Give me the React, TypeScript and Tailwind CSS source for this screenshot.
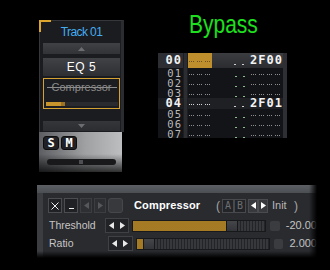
import React from "react";

function cx(...v: Array<string | false | null | undefined>) {
  return v.filter(Boolean).join(" ");
}

const mono = "font-['DejaVu_Sans_Mono',monospace]";
const sans = "font-['Liberation_Sans',Arial,sans-serif]";

const dotGrey = "bg-[repeating-linear-gradient(90deg,#8e8e8e_0_1px,transparent_1px_2px)]";
const dotWhite = "bg-[repeating-linear-gradient(90deg,#d6d6d6_0_1px,transparent_1px_2px)]";
const dotDark = "bg-[repeating-linear-gradient(90deg,#6b5424_0_1px,transparent_1px_2px)]";

function Dots({ n, tone }: { n: number; tone: string }) {
  return (
    <div className="flex gap-[3px]">
      {Array.from({ length: n }).map((_, i) => (
        <div key={i} className={cx("h-px w-[5px]", tone)} />
      ))}
    </div>
  );
}

function Tri({ dir, className }: { dir: "l" | "r" | "u" | "d"; className: string }) {
  const pts = {
    l: "5,0 5,7 0,3.5",
    r: "0,0 0,7 5,3.5",
    u: "0,4 7,4 3.5,0",
    d: "0,0 7,0 3.5,4",
  }[dir];
  const horiz = dir === "l" || dir === "r";
  return (
    <svg
      width={horiz ? 5 : 7}
      height={horiz ? 7 : 4}
      viewBox={horiz ? "0 0 5 7" : "0 0 7 4"}
      className={className}
    >
      <polygon points={pts} fill="currentColor" />
    </svg>
  );
}

function TrackStrip() {
  return (
    <div className="absolute left-[39px] top-[20px] w-[85px]">
      <div className="relative border-l border-t border-r-[3px] border-[#36373b] border-r-[#2b2c30] bg-[#1b1c1f] pb-[1px] pl-[3px] pr-[1px]">
        <div className="absolute -left-px -top-px h-[2px] w-[12px] bg-[#dea52c]" />
        <div className="absolute -left-px -top-px h-[12px] w-[2px] bg-[#dea52c]" />

        <div className={cx("flex h-[22px] items-center justify-center text-[12px] tracking-[-0.6px] text-[#44acf2]", sans)}>
          Track 01
        </div>

        <div className="flex h-[11px] items-center justify-center bg-gradient-to-b from-[#404145] to-[#323337]">
          <Tri dir="u" className="text-[#6c6d71]" />
        </div>

        <div className={cx("mt-[4px] flex h-[18px] items-center justify-center bg-gradient-to-b from-[#414246] to-[#2e2f33] text-[12px] tracking-[0.6px] text-white", sans)}>
          EQ 5
        </div>

        <div className="mt-[2px] flex h-[31px] flex-col border border-[#d4a133] bg-[#1c1d20] pt-[1px]">
          <div className="relative flex h-[14px] items-center justify-center">
            <span className={cx("text-[11px] text-[#8c8c8c]", sans)}>Compressor</span>
            <div className="absolute left-[3px] right-[2px] top-[7px] h-px bg-[#8c8c8c]" />
          </div>
          <div className="ml-[2px] mr-px mt-[8px] flex h-[4px] bg-[#2a2b2f]">
            <div className="w-[15px] bg-[#c8952d]" />
            <div className="w-[4px] bg-[#9b7226]" />
          </div>
        </div>

        <div className="mt-[12px] flex h-[10px] items-center justify-center bg-gradient-to-b from-[#35363a] to-[#2c2d31]">
          <Tri dir="d" className="text-[#6c6d71]" />
        </div>
      </div>

      <div className="h-[40px] w-[83px] bg-[linear-gradient(to_bottom,transparent_55%,rgba(0,0,0,0.75)),linear-gradient(to_right,#5c5e61,#9ea0a2_55%,#bcbec0)] pl-[4px] pt-[4px]">
        <div className="flex gap-[2px]">
          {["S", "M"].map((l) => (
            <div
              key={l}
              className={cx("flex h-[14px] w-[16px] items-center justify-center rounded-[3px] border border-[#0e0e0f] bg-[#202124] text-[12px] font-bold leading-none text-white", mono)}
            >
              {l}
            </div>
          ))}
        </div>
        <div className="ml-[4px] mt-[9px] flex h-[6px] w-[69px] items-center rounded-full bg-[#19191b]">
          <div className="ml-[32px] h-[4px] w-[4px] bg-[#4e4f52]" />
        </div>
      </div>
    </div>
  );
}

type Row = { n: string; big?: boolean; text?: string; h: string };

const rows: Row[] = [
  { n: "00", big: true, text: "2F00", h: "h-[15px]" },
  { n: "01", h: "h-[10px]" },
  { n: "02", h: "h-[10px]" },
  { n: "03", h: "h-[10px]" },
  { n: "04", big: true, text: "2F01", h: "h-[11px]" },
  { n: "05", h: "h-[10px]" },
  { n: "06", h: "h-[10px]" },
  { n: "07", h: "h-[10px]" },
];

function PatternView() {
  return (
    <div className="absolute left-[158px] top-[53px] h-[85px] w-[129px] overflow-hidden bg-[#131418]">
      {rows.map((r) => {
        const top = r.n === "00";
        const cur = r.n === "04";
        return (
          <div key={r.n} className={cx("flex", r.h)}>
            <div
              className={cx(
                "flex w-[25px] justify-end pr-[1px]",
                top && "bg-[#2c2e33] pt-[2px]",
                cur && "bg-[#1c1e22]",
              )}
            >
              <span
                className={cx(
                  "tracking-[1px]",
                  mono,
                  r.big
                    ? "text-[12px] font-bold leading-[11px] text-[#f2f2f2]"
                    : "text-[10.5px] leading-[10px] text-[#b9b9b9]",
                )}
              >
                {r.n}
              </span>
            </div>
            <div className="w-[5px] border-x border-[#1d1e22] bg-[#2c2d31]" />
            <div
              className={cx(
                "flex w-[95px]",
                top && "bg-gradient-to-b from-[#3b3d41] to-[#2a2c30]",
                cur && "bg-[#1e2024]",
              )}
            >
              <div className={cx("w-[25px] pl-px", top ? "bg-[#bf8f2e] pt-[8px]" : "pt-[6px]")}>
                <Dots n={3} tone={top ? dotDark : cur ? dotWhite : dotGrey} />
              </div>
              <div className={cx("ml-[22px] flex gap-[6px]", top ? "pt-[11px]" : "pt-[8px]")}>
                <div className={cx("h-px w-[2px]", r.big ? "bg-[#cfcfcf]" : "bg-[#8fbf8f]")} />
                <div className={cx("h-px w-[2px]", r.big ? "bg-[#cfcfcf]" : "bg-[#8fbf8f]")} />
              </div>
              {r.text ? (
                <div
                  className={cx(
                    "ml-[6px] text-[12px] font-bold leading-[11px] tracking-[1px] text-[#f4f4f4]",
                    mono,
                    top && "pt-[2px]",
                  )}
                >
                  {r.text}
                </div>
              ) : (
                <div className="ml-[6px] pt-[6px]">
                  <Dots n={4} tone={dotGrey} />
                </div>
              )}
            </div>
            <div className="w-[4px] bg-[#2e2f34]" />
          </div>
        );
      })}
    </div>
  );
}

function Slider({ fill }: { fill: number }) {
  return (
    <div className="relative h-[12px] w-[134px] border border-[#18191b] bg-[repeating-linear-gradient(90deg,#37383c_0_2px,#232427_2px_3px)]">
      <div
        className="absolute left-0 top-0 h-full bg-[#c99a36] bg-[radial-gradient(#a47a25_0.7px,transparent_0.9px)] bg-[length:2px_2px]"
        style={{ width: fill }}
      />
      <div
        className="absolute -top-px h-[12px] w-[12px] border border-[#17181a] bg-gradient-to-b from-[#45464a] to-[#34353a]"
        style={{ left: fill }}
      />
    </div>
  );
}

function ParamRow({ label, fill, value, mt }: { label: string; fill: number; value: string; mt: string }) {
  return (
    <div className={cx("flex h-[15px] items-center", mt)}>
      <div className={cx("w-[60px] pl-px text-[10.5px] text-[#c6c6c6]", sans)}>{label}</div>
      <div className="flex h-[15px] w-[25px] items-center justify-center gap-[6px] border border-[#404145] bg-[#222327]">
        <Tri dir="l" className="text-[#e8e8e8]" />
        <Tri dir="r" className="text-[#e8e8e8]" />
      </div>
      <div className="ml-[3px]">
        <Slider fill={fill} />
      </div>
      <div className="ml-[4px] h-[10px] w-[10px] rounded-[2px] bg-[#3b3c40]" />
      <div className={cx("ml-[6px] whitespace-nowrap text-[11px] text-[#c4c4c4]", sans)}>{value}</div>
    </div>
  );
}

function EffectPanel() {
  return (
    <div className="absolute left-[37px] top-[185px] h-[73px] w-[280px] overflow-hidden bg-[#3b3d41]">
      <div className="h-[8px] bg-gradient-to-b from-[#5c5f63] to-[#4b4e52]" />
      <div className="ml-[6px] h-[65px] bg-[#2a2b2f] pl-[5px] pt-[5px]">
        <div className="flex h-[15px] items-center">
          <div className="flex items-center gap-[2px]">
            <div className="flex h-[15px] w-[14px] items-center justify-center border border-[#4b4c50] bg-[#202124]">
              <svg width="8" height="8" viewBox="0 0 8 8">
                <path d="M0.5 0.5 L7.5 7.5 M7.5 0.5 L0.5 7.5" stroke="#ececec" strokeWidth="1" />
              </svg>
            </div>
            <div className="flex h-[15px] w-[14px] items-end justify-center border border-[#4b4c50] bg-[#202124] pb-[3px]">
              <div className="h-px w-[5px] bg-[#ececec]" />
            </div>
            <div className="flex h-[15px] w-[12px] items-center justify-center border border-[#3c3d41] bg-[#2e2f33]">
              <Tri dir="l" className="text-[#55575b]" />
            </div>
            <div className="flex h-[15px] w-[12px] items-center justify-center border border-[#3c3d41] bg-[#2e2f33]">
              <Tri dir="r" className="text-[#55575b]" />
            </div>
            <div className="h-[15px] w-[15px] rounded-[3px] border border-[#46474b] bg-[#38393d]" />
          </div>
          <div className={cx("ml-[11px] w-[82px] text-[11px] font-bold tracking-[0.15px] text-white", sans)}>
            Compressor
          </div>
          <span className={cx("text-[12px] text-[#a6a6a6]", sans)}>(</span>
          <div className="ml-[2px] flex">
            {["A", "B"].map((l) => (
              <div
                key={l}
                className={cx("flex h-[14px] w-[12px] items-center justify-center border border-[#48494d] bg-[#232428] text-[10px] text-[#6e6f73]", mono)}
              >
                {l}
              </div>
            ))}
          </div>
          <div className="ml-[2px] flex">
            <div className="flex h-[14px] w-[10px] items-center justify-center border border-[#4a4b4f] bg-[#38393d]">
              <Tri dir="l" className="text-white" />
            </div>
            <div className="flex h-[14px] w-[10px] items-center justify-center border border-[#4a4b4f] bg-[#38393d]">
              <Tri dir="r" className="text-white" />
            </div>
          </div>
          <span className={cx("ml-[4px] w-[22px] text-[11px] text-[#b6b6b6]", sans)}>Init</span>
          <span className={cx("text-[12px] text-[#a6a6a6]", sans)}>)</span>
        </div>

        <ParamRow label="Threshold" fill={93} value="-20.00" mt="mt-[5px]" />
        <ParamRow label="Ratio" fill={6} value="2.000" mt="mt-[3px]" />
      </div>
      <div className="absolute right-0 top-0 h-full w-[8px] bg-gradient-to-r from-transparent to-black" />
      <div className="absolute bottom-0 left-0 h-[7px] w-full bg-gradient-to-b from-transparent to-black" />
    </div>
  );
}

export default function App() {
  return (
    <div className="relative h-[270px] w-[330px] overflow-hidden bg-black">
      <TrackStrip />
      <div
        className={cx(
          "absolute left-[189px] top-[12px] origin-left scale-x-[0.84] text-[25px] leading-none text-[#1ee01e]",
          sans,
        )}
      >
        Bypass
      </div>
      <PatternView />
      <EffectPanel />
    </div>
  );
}
